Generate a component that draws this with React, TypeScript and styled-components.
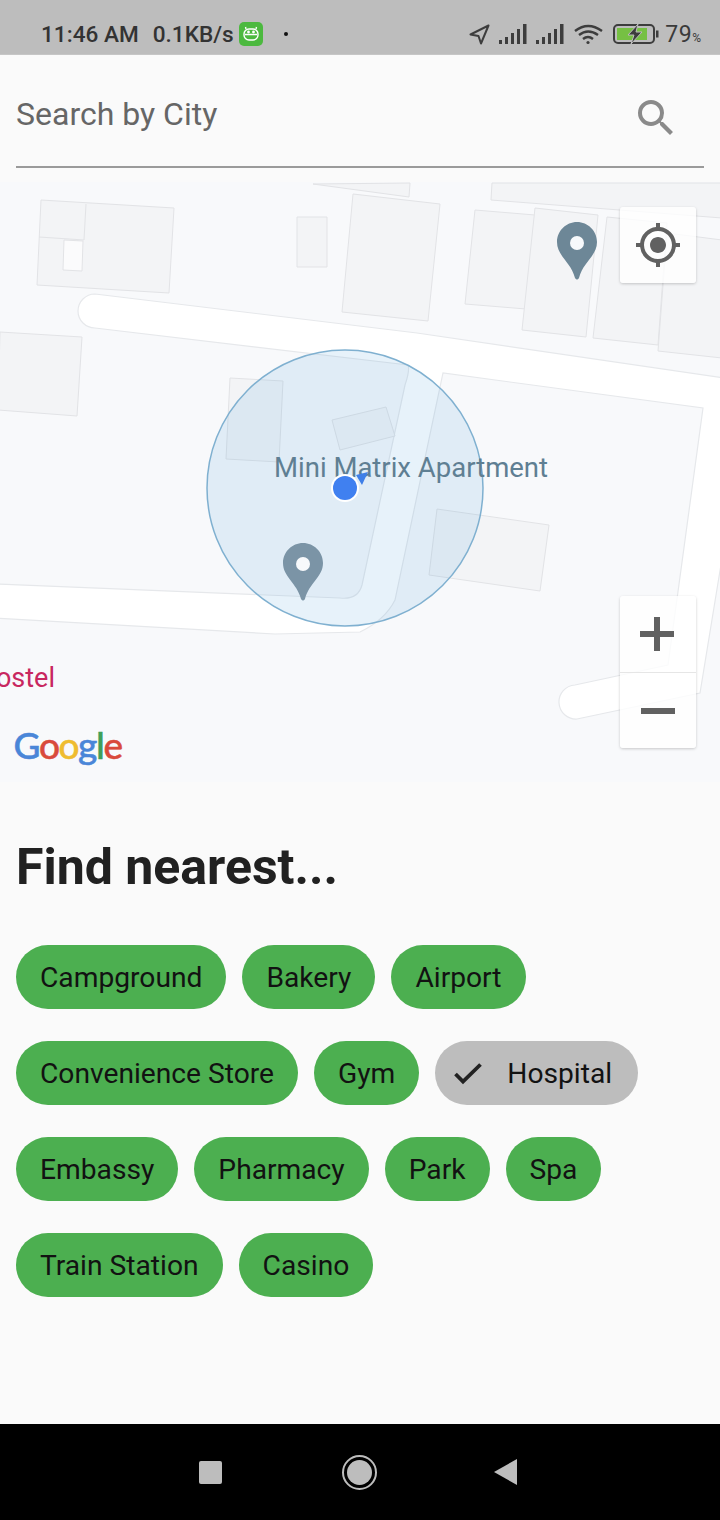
import styled, { createGlobalStyle } from "styled-components";
import { MdMyLocation, MdSearch } from "react-icons/md";

const GlobalStyle = createGlobalStyle`
  html, body {
    margin: 0;
    padding: 0;
    background: #fafafa;
  }
  * {
    box-sizing: border-box;
  }
`;

const Screen = styled.div`
  width: 720px;
  height: 1520px;
  display: flex;
  flex-direction: column;
  background: #fafafa;
  font-family: Roboto, "Liberation Sans", sans-serif;
  overflow: hidden;
`;

const StatusBar = styled.header`
  height: 55px;
  flex: none;
  display: flex;
  align-items: center;
  justify-content: space-between;
  padding: 14px 19px 0 41px;
  background: #bdbdbd;
  border-bottom: 1px solid #c6c6c6;
`;

const StatusGroup = styled.div`
  display: flex;
  align-items: center;
`;

const StatusText = styled.span<{ $gap?: number }>`
  font-size: 22.6px;
  font-weight: 500;
  color: #333;
  margin-left: ${(p) => p.$gap ?? 0}px;
  white-space: nowrap;
`;

const AppBadge = styled.div`
  width: 24px;
  height: 24px;
  margin-left: 5px;
  border-radius: 5px;
  background: #4cb93f;
  display: flex;
  align-items: center;
  justify-content: center;
`;

const NotifDot = styled.div`
  width: 4px;
  height: 4px;
  margin-left: 21px;
  border-radius: 50%;
  background: #111;
`;

const StatusIcon = styled.svg<{ $gap: number }>`
  display: block;
  margin-left: ${(p) => p.$gap}px;
`;

const BatteryText = styled.span`
  margin-left: 6px;
  font-size: 23px;
  letter-spacing: 0.5px;
  color: #3a3a3a;
`;

const PercentSign = styled.span`
  font-size: 12px;
  color: #3a3a3a;
  align-self: flex-end;
  padding-bottom: 3px;
`;

const SearchField = styled.div`
  height: 113px;
  flex: none;
  margin: 0 16px 14px;
  display: flex;
  align-items: center;
  justify-content: space-between;
  padding: 14px 24px 8px 0;
  border-bottom: 2px solid #9a9a9a;
`;

const SearchInput = styled.span`
  font-size: 32px;
  color: #666;
`;

const SearchButton = styled.div`
  display: flex;
  margin-top: 8px;
  color: #8a8a8a;
`;

const MapArea = styled.section`
  position: relative;
  height: 600px;
  flex: none;
  background: #f8f9fb;
  overflow: hidden;
`;

const MapCanvas = styled.svg`
  display: block;
  width: 720px;
  height: 600px;
`;

const ControlCard = styled.div<{ $top: number }>`
  position: absolute;
  top: ${(p) => p.$top}px;
  right: 24px;
  width: 76px;
  display: flex;
  flex-direction: column;
  background: rgba(255, 255, 255, 0.8);
  border-radius: 3px;
  box-shadow: 0 1px 3px rgba(0, 0, 0, 0.2);
  color: #616161;
`;

const ControlCell = styled.div<{ $divided?: boolean }>`
  height: 76px;
  display: flex;
  align-items: center;
  justify-content: center;
  border-top: ${(p) => (p.$divided ? "1px solid #e6e6e6" : "none")};
`;

const PlusGlyph = styled.svg`
  margin-right: 2px;
`;

const Heading = styled.h1`
  margin: 57px 0 0 16px;
  font-size: 50px;
  line-height: 56px;
  font-weight: 700;
  color: #212121;
`;

const ChipList = styled.div`
  margin-top: 50px;
  padding: 0 16px;
  display: flex;
  flex-wrap: wrap;
  gap: 32px 16px;
`;

const Chip = styled.div<{ $selected?: boolean }>`
  height: 64px;
  display: flex;
  align-items: center;
  padding: ${(p) => (p.$selected ? "0 26px 0 13px" : "0 24px")};
  border-radius: 32px;
  background: ${(p) => (p.$selected ? "#bdbdbd" : "#4caf50")};
  color: #121212;
  font-size: 28.2px;
  white-space: nowrap;
`;

const ChipCheck = styled.svg`
  display: block;
  margin-right: 21px;
  color: #222;
`;

const NavBar = styled.nav`
  margin-top: auto;
  height: 96px;
  flex: none;
  display: flex;
  justify-content: center;
  align-items: center;
  padding-right: 4px;
  background: #000;
`;

const NavCell = styled.div`
  width: 147.5px;
  display: flex;
  justify-content: center;
`;

const NavSquare = styled.div`
  width: 23px;
  height: 23px;
  border-radius: 2px;
  background: #bdbdbd;
`;

const NavCircle = styled.div`
  width: 35px;
  height: 35px;
  margin-left: 3px;
  border-radius: 50%;
  border: 2px solid #bdbdbd;
  padding: 3px;
  &::after {
    content: "";
    display: block;
    width: 100%;
    height: 100%;
    border-radius: 50%;
    background: #bdbdbd;
  }
`;

const NavTriangle = styled.div`
  width: 0;
  height: 0;
  border-style: solid;
  border-width: 13px 23px 13px 0;
  border-color: transparent #bdbdbd transparent transparent;
`;

const BUILDINGS = [
  "41,200 174,208 169,293 37,285",
  "353,194 440,204 428,321 342,312",
  "313,184 410,183 409,197",
  "0,332 82,337 77,416 -2,410",
  "297,217 327,217 327,267 297,267",
  "492,183 722,183 722,218 491,200",
  "475,210 535,215 526,309 465,304",
  "535,208 598,215 586,337 522,330",
  "607,217 667,223 658,345 593,338",
  "667,233 722,240 722,358 658,351",
  "230,378 283,381 279,462 226,459",
  "332,420 386,407 395,436 340,450",
  "437,509 549,525 540,591 429,575",
];

const ROADS =
  "M95,294 L417,333 L725,378 L725,540 L700,693 L577,719 A17,17 0 0 1 575,685 L668,665 L703,408 L443,373 L395,600 Q385,620 360,632 L275,634 L-5,618 L-5,584 L340,598 Q358,600 362,585 L405,385 Q410,370 408,365 L95,328 A17,17 0 0 1 95,294 Z";

const PIN =
  "M0,-21 C11,-21 20,-12 20,-1 C20,13 6,19 2,35 Q0,38 -2,35 C-6,19 -20,13 -20,-1 C-20,-12 -11,-21 0,-21 Z";

const SignalBars = ({ gap }: { gap: number }) => (
  <StatusIcon $gap={gap} width="28" height="20" viewBox="0 0 28 20" fill="#3d3d3d">
    <rect x="0" y="16" width="3" height="4" />
    <rect x="6" y="13" width="3" height="7" />
    <rect x="12" y="9" width="3" height="11" />
    <rect x="18" y="5" width="3" height="15" />
    <rect x="24" y="0" width="3.5" height="20" />
  </StatusIcon>
);

const MapPin = ({ x, y, color }: { x: number; y: number; color: string }) => (
  <g transform={`translate(${x} ${y})`}>
    <path d={PIN} fill={color} />
    <circle r="7" fill="#f7f9fb" />
  </g>
);

const LOGO_LETTERS = [
  ["G", "#4a86d8"],
  ["o", "#d94a3c"],
  ["o", "#efbc2f"],
  ["g", "#4a86d8"],
  ["l", "#3fa057"],
  ["e", "#d94a3c"],
];

const PLACES = [
  "Campground",
  "Bakery",
  "Airport",
  "Convenience Store",
  "Gym",
  "Hospital",
  "Embassy",
  "Pharmacy",
  "Park",
  "Spa",
  "Train Station",
  "Casino",
];

const App = () => {
  return (
    <Screen>
      <GlobalStyle />
      <StatusBar>
        <StatusGroup>
          <StatusText>11:46 AM</StatusText>
          <StatusText $gap={14}>0.1KB/s</StatusText>
          <AppBadge>
            <svg width="18" height="16" viewBox="0 0 18 16" fill="none" stroke="#fff" strokeWidth="1.4">
              <rect x="2" y="3" width="14" height="11" rx="5" />
              <path d="M4 3 L3.5 1 M14 3 L14.5 1 M3 8.5 H15" />
              <circle cx="6.5" cy="6" r="0.7" fill="#fff" />
              <circle cx="11.5" cy="6" r="0.7" fill="#fff" />
            </svg>
          </AppBadge>
          <NotifDot />
        </StatusGroup>
        <StatusGroup>
          <StatusIcon $gap={0} width="21" height="21" viewBox="0 0 21 21" fill="none" stroke="#3d3d3d" strokeWidth="2" strokeLinejoin="round">
            <path d="M19.5 1.5 L1.5 10.5 L9.5 12 L12 19.5 Z" />
          </StatusIcon>
          <SignalBars gap={9} />
          <SignalBars gap={9} />
          <StatusIcon $gap={10} width="29" height="21" viewBox="0 0 29 21" fill="none" stroke="#3d3d3d" strokeWidth="2.4">
            <path d="M1 7 Q14 -3 28 7" />
            <path d="M5 11 Q14 4 24 11" />
            <path d="M9 15 Q14 11 19 15" />
            <circle cx="14" cy="18.5" r="1.6" fill="#3d3d3d" stroke="none" />
          </StatusIcon>
          <StatusIcon $gap={10} width="46" height="20" viewBox="0 0 46 20">
            <rect x="1" y="1" width="40" height="18" rx="4" fill="none" stroke="#3d3d3d" strokeWidth="2" />
            <rect x="4" y="4" width="30" height="12" fill="#76c043" />
            <rect x="43" y="6.5" width="2.5" height="7" fill="#3d3d3d" />
            <path d="M25 0 L15 11 H21 L18 20 L29 8 H23 Z" fill="#3d3d3d" stroke="#bdbdbd" strokeWidth="1" />
          </StatusIcon>
          <BatteryText>79</BatteryText>
          <PercentSign>%</PercentSign>
        </StatusGroup>
      </StatusBar>

      <SearchField>
        <SearchInput>Search by City</SearchInput>
        <SearchButton>
          <MdSearch size={48} />
        </SearchButton>
      </SearchField>

      <MapArea>
        <MapCanvas viewBox="0 182 720 600">
          <path d={ROADS} fill="#fff" stroke="#e6e8eb" strokeWidth="1.2" />
          {BUILDINGS.map((points) => (
            <polygon key={points} points={points} fill="#f3f4f6" stroke="#e2e3e6" strokeWidth="1" />
          ))}
          <polygon points="64,240 83,241 82,271 63,270" fill="#fbfbfc" stroke="#e2e3e6" />
          <path d="M86,204 L84,240 L39,237" fill="none" stroke="#e2e3e6" />
          <circle cx="345" cy="488" r="138" fill="rgba(60,150,210,0.12)" stroke="#7fb0d0" strokeWidth="1.5" />
          <text x="274" y="477" fontFamily="Roboto, sans-serif" fontSize="27.5" fill="#5f7f93">
            Mini Matrix Apartment
          </text>
          <text x="55" y="687" textAnchor="end" fontFamily="Roboto, sans-serif" fontSize="27" fill="#c8275f">
            Hostel
          </text>
          <MapPin x={577} y={243} color="#6d8797" />
          <MapPin x={303} y={564} color="#7b94a6" />
          <polygon points="356,475 368,472 362,485" fill="#3f7fe8" />
          <circle cx="345" cy="488" r="14" fill="#fff" />
          <circle cx="345" cy="488" r="12" fill="#4080f0" />
          <text x="13.5" y="759" fontFamily="Lato, sans-serif" fontSize="37" fontWeight="500" letterSpacing="-1.4">
            {LOGO_LETTERS.map(([letter, color], i) => (
              <tspan key={i} fill={color} stroke={color} strokeWidth="0.5">
                {letter}
              </tspan>
            ))}
          </text>
        </MapCanvas>
        <ControlCard $top={25}>
          <ControlCell>
            <MdMyLocation size={48} />
          </ControlCell>
        </ControlCard>
        <ControlCard $top={414}>
          <ControlCell>
            <PlusGlyph width="34" height="34" viewBox="0 0 34 34" fill="currentColor">
              <path d="M14 0h6v14h14v6H20v14h-6V20H0v-6h14z" />
            </PlusGlyph>
          </ControlCell>
          <ControlCell $divided>
            <svg width="34" height="6" viewBox="0 0 34 6" fill="currentColor">
              <rect width="34" height="6" />
            </svg>
          </ControlCell>
        </ControlCard>
      </MapArea>

      <Heading>Find nearest...</Heading>
      <ChipList>
        {PLACES.map((name) =>
          name === "Hospital" ? (
            <Chip key={name} $selected>
              <ChipCheck width="38" height="38" viewBox="0 0 38 38" fill="none" stroke="currentColor" strokeWidth="3.8">
                <path d="M7.5 20 L15 27.5 L32.5 10.5" />
              </ChipCheck>
              {name}
            </Chip>
          ) : (
            <Chip key={name}>{name}</Chip>
          ),
        )}
      </ChipList>

      <NavBar>
        <NavCell>
          <NavSquare />
        </NavCell>
        <NavCell>
          <NavCircle />
        </NavCell>
        <NavCell>
          <NavTriangle />
        </NavCell>
      </NavBar>
    </Screen>
  );
};

export default App;
